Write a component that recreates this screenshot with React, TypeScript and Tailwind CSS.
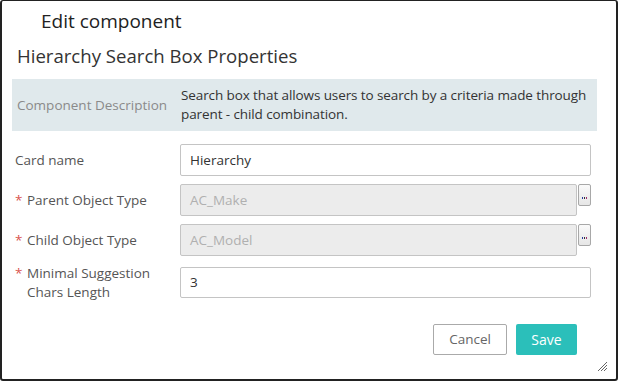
import React from "react";

const font = { fontFamily: '"Open Sans", "Noto Sans", sans-serif' };

function Label({ text, required }: { text: React.ReactNode; required?: boolean }) {
  return (
    <div className="w-[167px] shrink-0 flex items-start pl-[2px] pr-2 text-[13.5px] leading-[19px] text-[#555]">
      {required ? <span className="text-[#d9534f] w-[12px] shrink-0">*</span> : null}
      <span>{text}</span>
    </div>
  );
}

function Ellipsis() {
  return (
    <div className="w-[13px] h-[22px] shrink-0 self-start ml-[1px] border border-[#a8a8a8] rounded-[2px] bg-gradient-to-b from-[#fafafa] to-[#e6e6e6] flex items-end justify-center gap-[1px] pb-[6px]">
      <span className="w-[1px] h-[2px] bg-[#2a3fa0]" />
      <span className="w-[1px] h-[2px] bg-[#333]" />
      <span className="w-[1px] h-[2px] bg-[#a02a6a]" />
    </div>
  );
}

export default function App() {
  return (
    <div
      style={font}
      className="relative w-[618px] h-[381px] bg-white border-t border-x-2 border-b-2 border-[#222] rounded-[3px] flex flex-col"
    >
      <div className="pl-[39px] pt-[7px] text-[19px] leading-[26px] text-[#222]">Edit component</div>
      <div className="pl-[15px] pt-[10px] text-[18.6px] leading-[24px] text-[#333]">
        Hierarchy Search Box Properties
      </div>
      <div className="ml-[10px] mt-[11px] w-[585px] h-[52px] bg-[#e0e9ec] flex items-center">
        <div className="w-[169px] shrink-0 pl-[5px] text-[13.5px] text-[#8a8a8a]">Component Description</div>
        <div className="text-[13.5px] leading-[19px] text-[#333] tracking-[-0.1px]">
          Search box that allows users to search by a criteria made through parent - child combination.
        </div>
      </div>

      <div className="mt-[13px] ml-[11px] flex flex-col">
        <div className="flex items-center h-[32px]">
          <Label text="Card name" />
          <div className="w-[411px] h-[32px] border border-[#c4c4c4] rounded-[2px] flex items-center px-[9px] text-[13.5px] text-[#333]">
            Hierarchy
          </div>
        </div>
        <div className="flex items-center h-[32px] mt-[8px]">
          <Label text="Parent Object Type" required />
          <div className="w-[397px] h-[32px] border border-[#c4c4c4] rounded-[2px] bg-[#ececec] flex items-center px-[9px] text-[13.5px] text-[#b0b0b0]">
            AC_Make
          </div>
          <Ellipsis />
        </div>
        <div className="flex items-center h-[32px] mt-[8px]">
          <Label text="Child Object Type" required />
          <div className="w-[397px] h-[32px] border border-[#c4c4c4] rounded-[2px] bg-[#ececec] flex items-center px-[9px] text-[13.5px] text-[#b0b0b0]">
            AC_Model
          </div>
          <Ellipsis />
        </div>
        <div className="flex items-center h-[31px] mt-[11px]">
          <Label
            text={
              <>
                Minimal Suggestion
                <br />
                Chars Length
              </>
            }
            required
          />
          <div className="w-[411px] h-[31px] border border-[#c4c4c4] rounded-[2px] flex items-center px-[9px] text-[13.5px] text-[#333]">
            3
          </div>
        </div>
      </div>

      <div className="mt-[26px] flex justify-end gap-[9px] pr-[39px]">
        <button className="w-[74px] h-[31px] border border-[#aaa] rounded-[2px] bg-white text-[13.5px] text-[#666]">
          Cancel
        </button>
        <button className="w-[61px] h-[31px] rounded-[2px] bg-[#2bbfba] text-[14px] text-white">Save</button>
      </div>

      <svg className="absolute right-[8px] bottom-[7px]" width="12" height="12" viewBox="0 0 12 12">
        <path d="M11 2 L2 11 M11 5 L5 11 M11 8 L8 11" stroke="#666" strokeWidth="1" />
      </svg>
    </div>
  );
}
